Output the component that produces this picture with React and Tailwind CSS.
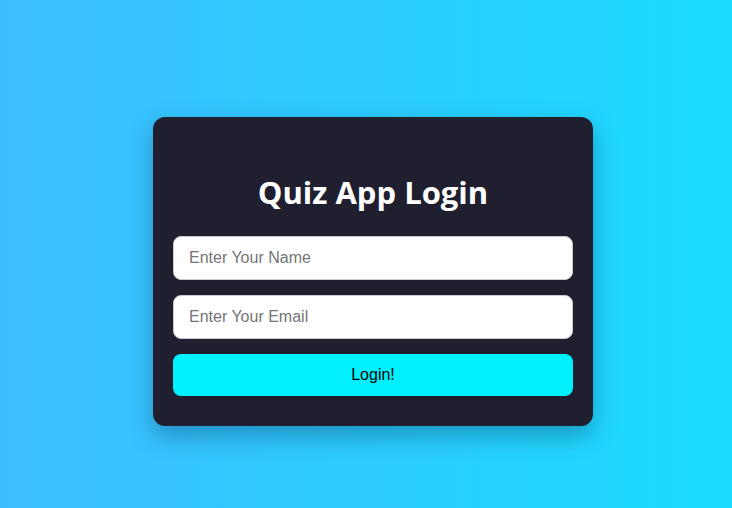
export default function App() {
  return (
    <div
      className="w-[732px] h-[508px] flex items-center justify-center bg-[linear-gradient(to_right,#3ebdfe,#1bdcfe)]"
    >
      <div className="ml-[14px] mt-[35px] w-[440px] h-[309px] rounded-[12px] bg-[#1f1f30] shadow-[0_10px_25px_rgba(0,40,80,0.35)] px-[20px] pt-[53px] flex flex-col">
        <h1 className="text-center text-white text-[31px] leading-[44px] font-bold font-['Open_Sans',sans-serif] h-[44px]">
          Quiz App Login
        </h1>
        <input
          className="mt-[22px] h-[44px] w-full rounded-[8px] border border-[#ccc] bg-white px-[15px] text-[16px] font-['Liberation_Sans',Arial,sans-serif] placeholder:text-[#757575] outline-none"
          placeholder="Enter Your Name"
        />
        <input
          className="mt-[15px] h-[44px] w-full rounded-[8px] border border-[#ccc] bg-white px-[15px] text-[16px] font-['Liberation_Sans',Arial,sans-serif] placeholder:text-[#757575] outline-none"
          placeholder="Enter Your Email"
        />
        <button className="mt-[15px] h-[42px] w-full rounded-[8px] bg-[#00f0fe] text-black text-[16px] font-['Liberation_Sans',Arial,sans-serif]">
          Login!
        </button>
      </div>
    </div>
  );
}
